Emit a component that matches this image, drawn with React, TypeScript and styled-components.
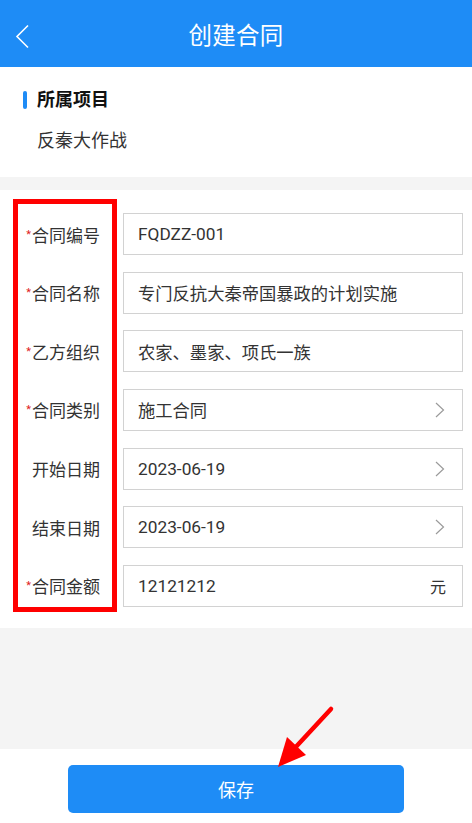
import React from 'react'
import styled, { createGlobalStyle } from 'styled-components'

const GlobalStyle = createGlobalStyle`
    html, body {
        margin: 0;
        padding: 0;
        background: #f4f4f4;
    }
    body {
        font-family: Roboto, 'Noto Sans CJK SC', sans-serif;
        color: #333;
    }
`

const Page = styled.div`
    position: relative;
    width: 472px;
    height: 823px;
    display: flex;
    flex-direction: column;
    background: #f4f4f4;
    overflow: hidden;
`

const Header = styled.header`
    height: 67px;
    flex-shrink: 0;
    background: #1e8cf6;
    display: flex;
    align-items: center;
    justify-content: center;
    position: relative;
`

const BackButton = styled.button`
    position: absolute;
    left: 10px;
    top: 20px;
    width: 26px;
    height: 34px;
    padding: 0;
    border: 0;
    background: transparent;
    display: flex;
    align-items: center;
    justify-content: center;
`

const Title = styled.h1`
    margin: 0;
    color: #fff;
    font-size: 23.5px;
    font-weight: 400;
    letter-spacing: 0.3px;
`

const ProjectCard = styled.section`
    background: #fff;
    height: 110px;
    padding: 22px 0 0 23px;
    box-sizing: border-box;
    margin-bottom: 13px;
`

const SectionTitle = styled.div`
    display: flex;
    align-items: center;
    gap: 10px;
    font-size: 18px;
    font-weight: 700;
    color: #111;
    height: 22px;
    line-height: 22px;
`

const Bar = styled.span`
    width: 4px;
    height: 18px;
    border-radius: 2px;
    background: #1e8cf6;
`

const ProjectName = styled.div`
    margin: 19px 0 0 14px;
    font-size: 18px;
    line-height: 22px;
    color: #333;
`

const FormCard = styled.section`
    position: relative;
    background: #fff;
    height: 438px;
    box-sizing: border-box;
    padding: 23px 9px 0 0;
    display: flex;
    flex-direction: column;
    gap: 16.67px;
`

const Row = styled.div`
    display: grid;
    grid-template-columns: 100px 340px;
    column-gap: 23px;
    align-items: center;
`

const Label = styled.label`
    display: flex;
    justify-content: flex-end;
    align-items: center;
    font-size: 17px;
    color: #333;
    white-space: nowrap;
`

const Star = styled.span`
    color: #e02020;
    font-size: 11px;
    margin-right: 1px;
    position: relative;
    top: 0;
`

const Field = styled.div`
    height: 42px;
    box-sizing: border-box;
    border: 1px solid #d2d2d2;
    display: flex;
    align-items: center;
    justify-content: space-between;
    padding: 0 16px 0 14px;
    font-size: 17.3px;
    color: #333;
`

const Unit = styled.span`
    font-size: 16px;
    color: #333;
`

const Highlight = styled.div`
    position: absolute;
    left: 13px;
    top: 9px;
    width: 104px;
    height: 413px;
    box-sizing: border-box;
    border: 5px solid #ff0000;
    pointer-events: none;
`

const Spacer = styled.div`
    flex: 1;
`

const Footer = styled.footer`
    height: 74px;
    flex-shrink: 0;
    background: #fff;
    display: flex;
    justify-content: center;
    padding-top: 16px;
    box-sizing: border-box;
`

const SaveButton = styled.button`
    width: 336px;
    height: 48px;
    border: 0;
    border-radius: 5px;
    background: #1e8cf6;
    color: #fff;
    font-family: Roboto, 'Noto Sans CJK SC', sans-serif;
    font-size: 18px;
`

const ArrowLayer = styled.svg`
    position: absolute;
    left: 0;
    top: 0;
    pointer-events: none;
`

const Chevron = () => (
    <svg width="12" height="16" viewBox="0 0 12 16">
        <path d="M2 1 L9.5 8 L2 15" fill="none" stroke="#9a9a9a" strokeWidth="1.2" />
    </svg>
)

interface FieldData {
    label: string
    value: string
    required?: boolean
    kind?: 'text' | 'select' | 'money'
}

const fields: FieldData[] = [
    { label: '合同编号', value: 'FQDZZ-001', required: true },
    { label: '合同名称', value: '专门反抗大秦帝国暴政的计划实施', required: true },
    { label: '乙方组织', value: '农家、墨家、项氏一族', required: true },
    { label: '合同类别', value: '施工合同', required: true, kind: 'select' },
    { label: '开始日期', value: '2023-06-19', kind: 'select' },
    { label: '结束日期', value: '2023-06-19', kind: 'select' },
    { label: '合同金额', value: '12121212', required: true, kind: 'money' },
]

export default function App() {
    return (
        <Page>
            <GlobalStyle />
            <Header>
                <BackButton aria-label="返回">
                    <svg width="16" height="26" viewBox="0 0 16 26">
                        <path d="M13 1.5 L2 12.5 L13 23.5" fill="none" stroke="#fff" strokeWidth="1.6" />
                    </svg>
                </BackButton>
                <Title>创建合同</Title>
            </Header>

            <ProjectCard>
                <SectionTitle>
                    <Bar />
                    所属项目
                </SectionTitle>
                <ProjectName>反秦大作战</ProjectName>
            </ProjectCard>

            <FormCard>
                {fields.map(f => (
                    <Row key={f.label}>
                        <Label>
                            {f.required && <Star>*</Star>}
                            {f.label}
                        </Label>
                        <Field>
                            <span>{f.value}</span>
                            {f.kind === 'select' && <Chevron />}
                            {f.kind === 'money' && <Unit>元</Unit>}
                        </Field>
                    </Row>
                ))}
                <Highlight />
            </FormCard>

            <Spacer />

            <Footer>
                <SaveButton>保存</SaveButton>
            </Footer>

            <ArrowLayer width="472" height="823" viewBox="0 0 472 823">
                <line x1="331" y1="709" x2="293" y2="750" stroke="#ff0000" strokeWidth="4.5" strokeLinecap="round" />
                <polygon points="278,767 287,737 306,755" fill="#ff0000" />
            </ArrowLayer>
        </Page>
    )
}
